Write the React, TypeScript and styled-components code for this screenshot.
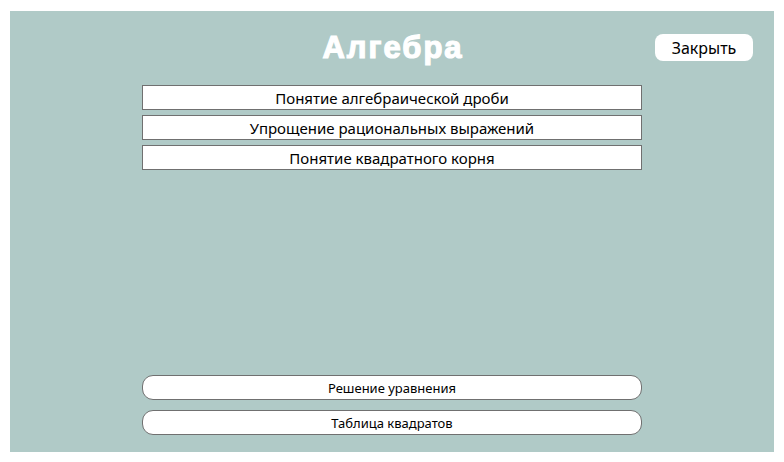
import React from 'react';
import styled, { createGlobalStyle } from 'styled-components';

const GlobalStyle = createGlobalStyle`
  html, body {
    margin: 0;
    padding: 0;
    background: #ffffff;
  }
`;

const Panel = styled.div`
  box-sizing: border-box;
  margin: 11px 10px 10px 10px;
  height: 441px;
  background-color: #b0cac7;
  padding: 21px 21px 17px 21px;
  display: flex;
  flex-direction: column;
  font-family: "Noto Sans", "Open Sans", sans-serif;
`;

const Header = styled.div`
  display: grid;
  grid-template-columns: 1fr auto 1fr;
  align-items: center;
  height: 27px;
`;

const Title = styled.h1`
  grid-column: 2;
  margin: 0 0 0 2px;
  font-family: "Liberation Sans", Arial, sans-serif;
  font-size: 31px;
  font-weight: 700;
  letter-spacing: 2px;
  color: #ffffff;
  -webkit-text-stroke: 1.2px #ffffff;
  line-height: 1;
`;

const CloseButton = styled.button`
  grid-column: 3;
  justify-self: end;
  width: 98px;
  height: 27px;
  border: none;
  border-radius: 8px;
  background: #ffffff;
  color: #000000;
  font-family: "Noto Sans", "Open Sans", sans-serif;
  font-size: 16px;
  padding: 0;
  cursor: pointer;
`;

const TopicList = styled.ul`
  list-style: none;
  margin: 26px auto 0 auto;
  padding: 0;
  width: 500px;
  display: flex;
  flex-direction: column;
  gap: 5px;
`;

const Topic = styled.li`
  box-sizing: border-box;
  height: 25px;
  border: 1px solid #707070;
  background: #ffffff;
  display: flex;
  align-items: center;
  justify-content: center;
  font-size: 15px;
  color: #000000;
`;

const Spacer = styled.div`
  flex: 1;
`;

const ToolList = styled.div`
  width: 500px;
  margin: 0 auto;
  display: flex;
  flex-direction: column;
  gap: 10px;
`;

const ToolButton = styled.button`
  box-sizing: border-box;
  height: 25px;
  width: 100%;
  border: 1px solid #707070;
  border-radius: 11px;
  background: #ffffff;
  color: #000000;
  font-family: "Noto Sans", "Open Sans", sans-serif;
  font-size: 13px;
  padding: 0;
  cursor: pointer;
`;

const topics = [
  'Понятие алгебраической дроби',
  'Упрощение рациональных выражений',
  'Понятие квадратного корня',
];

const tools = ['Решение уравнения', 'Таблица квадратов'];

const App: React.FC = () => {
  return (
    <>
      <GlobalStyle />
      <Panel>
        <Header>
          <Title>Алгебра</Title>
          <CloseButton>Закрыть</CloseButton>
        </Header>
        <TopicList>
          {topics.map((t) => (
            <Topic key={t}>{t}</Topic>
          ))}
        </TopicList>
        <Spacer />
        <ToolList>
          {tools.map((t) => (
            <ToolButton key={t}>{t}</ToolButton>
          ))}
        </ToolList>
      </Panel>
    </>
  );
};

export default App;
